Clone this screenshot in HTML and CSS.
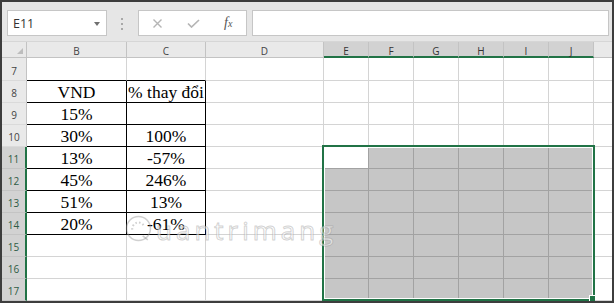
FILE: index.html
```html
<!DOCTYPE html>
<html lang="vi">
<head>
  <meta charset="UTF-8">
  <title>Excel - chọn vùng E11:J17</title>
  <link rel="stylesheet" href="styles.css">
</head>
<body>
  <div class="app">
    <div class="toolbar">
      <div class="namebox"><span>E11</span><span class="caret"></span></div>
      <div class="grip"><i></i><i></i><i></i></div>
      <div class="fbuttons">
        <svg class="icon-x" viewBox="0 0 11 9"><path d="M1.5 0.5L9.5 8.5M9.5 0.5L1.5 8.5"></path></svg>
        <svg class="icon-ok" viewBox="0 0 13 9"><path d="M1 4.5L4.5 8L12 1"></path></svg>
        <span class="fx">f<small>x</small></span>
      </div>
      <div class="formula"></div>
    </div>

    <div class="sheet">
      <!-- column headers -->
      <div class="corner"></div>
      <div class="ch">B</div><div class="ch">C</div><div class="ch">D</div>
      <div class="ch on">E</div><div class="ch on">F</div><div class="ch on">G</div>
      <div class="ch on">H</div><div class="ch on">I</div><div class="ch on">J</div>
      <div class="ch k"></div>

      <!-- row 7 -->
      <div class="rh">7</div>
      <div class="c top"></div><div class="c top"></div><div class="c"></div>
      <div class="c"></div><div class="c"></div><div class="c"></div><div class="c"></div><div class="c"></div><div class="c"></div>
      <div class="c k"></div>

      <!-- row 8 -->
      <div class="rh">8</div>
      <div class="c t">VND</div><div class="c t">% thay đổi</div><div class="c"></div>
      <div class="c"></div><div class="c"></div><div class="c"></div><div class="c"></div><div class="c"></div><div class="c"></div>
      <div class="c k"></div>

      <!-- row 9 -->
      <div class="rh">9</div>
      <div class="c t">15%</div><div class="c t"></div><div class="c"></div>
      <div class="c"></div><div class="c"></div><div class="c"></div><div class="c"></div><div class="c"></div><div class="c"></div>
      <div class="c k"></div>

      <!-- row 10 -->
      <div class="rh">10</div>
      <div class="c t">30%</div><div class="c t">100%</div><div class="c"></div>
      <div class="c"></div><div class="c"></div><div class="c"></div><div class="c"></div><div class="c"></div><div class="c"></div>
      <div class="c k"></div>

      <!-- row 11 -->
      <div class="rh on">11</div>
      <div class="c t">13%</div><div class="c t">-57%</div><div class="c"></div>
      <div class="c s a"></div><div class="c s"></div><div class="c s"></div><div class="c s"></div><div class="c s"></div><div class="c s"></div>
      <div class="c k"></div>

      <!-- row 12 -->
      <div class="rh on">12</div>
      <div class="c t">45%</div><div class="c t">246%</div><div class="c"></div>
      <div class="c s"></div><div class="c s"></div><div class="c s"></div><div class="c s"></div><div class="c s"></div><div class="c s"></div>
      <div class="c k"></div>

      <!-- row 13 -->
      <div class="rh on">13</div>
      <div class="c t">51%</div><div class="c t">13%</div><div class="c"></div>
      <div class="c s"></div><div class="c s"></div><div class="c s"></div><div class="c s"></div><div class="c s"></div><div class="c s"></div>
      <div class="c k"></div>

      <!-- row 14 -->
      <div class="rh on">14</div>
      <div class="c t">20%</div><div class="c t">-61%</div><div class="c"></div>
      <div class="c s"></div><div class="c s"></div><div class="c s"></div><div class="c s"></div><div class="c s"></div><div class="c s"></div>
      <div class="c k"></div>

      <!-- row 15 -->
      <div class="rh on">15</div>
      <div class="c"></div><div class="c"></div><div class="c"></div>
      <div class="c s"></div><div class="c s"></div><div class="c s"></div><div class="c s"></div><div class="c s"></div><div class="c s"></div>
      <div class="c k"></div>

      <!-- row 16 -->
      <div class="rh on">16</div>
      <div class="c"></div><div class="c"></div><div class="c"></div>
      <div class="c s"></div><div class="c s"></div><div class="c s"></div><div class="c s"></div><div class="c s"></div><div class="c s"></div>
      <div class="c k"></div>

      <!-- row 17 -->
      <div class="rh on">17</div>
      <div class="c"></div><div class="c"></div><div class="c"></div>
      <div class="c s"></div><div class="c s"></div><div class="c s"></div><div class="c s"></div><div class="c s"></div><div class="c s"></div>
      <div class="c k"></div>

      <!-- selection outline E11:J17, laid over its grid area -->
      <div class="selection"><span class="handle"></span></div>

      <div class="watermark">
        <svg class="wm-logo" viewBox="0 0 26 26">
          <circle cx="13" cy="13" r="11.5"></circle>
          <path class="wm-dots" d="M7 14a6 6 0 0 1 11-4"></path>
          <path d="M17 20l5 4"></path>
        </svg>
        <span>uantrimang</span>
      </div>
    </div>
  </div>
</body>
</html>
```

FILE: styles.css
```css
:root {
  --frame: #3d3d3d;
  --bar: #e6e6e6;
  --box-border: #c6c6c6;
  --head: #e9e9e9;
  --head-on: #d2d2d2;
  --head-line: #c3c3c3;
  --grid: #d4d4d4;
  --green: #217346;
  --sel: #c6c6c6;
  --sel-line: #a2a2a2;
}

* {
  box-sizing: border-box;
}

body {
  margin: 0;
  font-family: "Open Sans", "Liberation Sans", sans-serif;
}

.app {
  width: 614px;
  height: 303px;
  border: 2px solid var(--frame);
  background-color: var(--bar);
  overflow: hidden;
}

/* formula bar */
.toolbar {
  display: flex;
  align-items: flex-start;
  height: 40px;
  padding: 8px 3px 0 5px;
  border-bottom: 1px solid #d6d6d6;
}

.namebox {
  display: flex;
  align-items: center;
  justify-content: space-between;
  width: 100px;
  height: 26px;
  padding: 0 6px 0 5px;
  background-color: white;
  border: 1px solid var(--box-border);
  font-size: 12.5px;
  color: #333;
}

.caret {
  width: 0;
  height: 0;
  margin-top: 1px;
  border-left: 3.5px solid transparent;
  border-right: 3.5px solid transparent;
  border-top: 4px solid #707070;
}

.grip {
  display: flex;
  flex-direction: column;
  gap: 3px;
  width: 3px;
  margin: 8px 14px 0;
}

.grip i {
  width: 2px;
  height: 2px;
  background-color: #a8a8a8;
}

.fbuttons {
  display: flex;
  align-items: center;
  gap: 24px;
  width: 109px;
  height: 26px;
  padding-left: 13px;
  background-color: white;
  border: 1px solid var(--box-border);
}

.fbuttons svg {
  fill: none;
  stroke: #b5b5b5;
}

.icon-x {
  width: 11px;
  height: 9px;
  stroke-width: 1.4;
}

.icon-ok {
  width: 13px;
  height: 9px;
  stroke-width: 1.7;
}

.fx {
  font-family: "Liberation Serif", serif;
  font-style: italic;
  font-size: 14px;
  color: #555;
  line-height: 1;
}

.fx small {
  font-size: 10px;
}

.formula {
  flex: 1;
  height: 26px;
  margin-left: 5px;
  background-color: white;
  border: 1px solid var(--box-border);
}

/* worksheet */
.sheet {
  position: relative;
  display: grid;
  grid-template-columns: 25px 100px 79px 118px repeat(6, 45px) 1fr;
  grid-template-rows: 16px 23px repeat(10, 22px);
  background-color: white;
}

.corner,
.ch {
  background-color: var(--head);
  border-right: 1px solid var(--head-line);
  border-bottom: 1px solid var(--head-line);
}

.corner {
  position: relative;
}

.corner::after {
  content: "";
  position: absolute;
  right: 3px;
  bottom: 3px;
  border-left: 6px solid transparent;
  border-bottom: 6px solid #bdbdbd;
}

.ch {
  padding-top: 3px;
  font-size: 10px;
  line-height: 12px;
  text-align: center;
  color: #444;
}

.ch.on {
  background-color: var(--head-on);
  border-bottom: 2px solid var(--green);
  color: #333;
}

.ch.k {
  border-right: none;
}

.rh {
  display: flex;
  align-items: flex-end;
  justify-content: center;
  padding-bottom: 2px;
  background-color: var(--head);
  border-right: 1px solid var(--head-line);
  border-bottom: 1px solid #dadada;
  font-size: 10px;
  line-height: 14px;
  color: #444;
}

.rh.on {
  background-color: var(--head-on);
  border-right: 2px solid var(--green);
  border-bottom-color: #c4c4c4;
  color: #2f5c45;
}

.c {
  display: flex;
  align-items: flex-end;
  justify-content: center;
  border-right: 1px solid var(--grid);
  border-bottom: 1px solid var(--grid);
  font-family: "Liberation Serif", serif;
  font-size: 17.5px;
  line-height: 19px;
  white-space: nowrap;
  color: black;
}

.c.k {
  border-right: none;
}

.c.top {
  border-bottom-color: black;
}

.c.t {
  border-right-color: black;
  border-bottom-color: black;
}

.c.s {
  background-color: var(--sel);
  border-right-color: var(--sel-line);
  border-bottom-color: var(--sel-line);
}

.c.s.a {
  background-color: white;
}

/* absolutely placed in its grid area, so it takes no cells from the flow */
.selection {
  position: absolute;
  grid-column: 5 / 11;
  grid-row: 6 / 13;
  top: -2px;
  left: -2px;
  right: -1px;
  bottom: 0;
  border: 2px solid var(--green);
  box-shadow: inset 0 0 0 1px white;
  pointer-events: none;
}

.handle {
  position: absolute;
  right: -2px;
  bottom: -2px;
  width: 6px;
  height: 6px;
  background-color: var(--green);
  border-left: 1px solid white;
  border-top: 1px solid white;
}

.watermark {
  position: absolute;
  left: 123px;
  top: 166px;
  display: flex;
  align-items: center;
  gap: 4px;
  pointer-events: none;
}

.wm-logo {
  width: 27px;
  height: 27px;
  fill: none;
  stroke: rgba(150, 150, 150, 0.45);
  stroke-width: 1.5;
}

.wm-dots {
  stroke-dasharray: 1.5 2;
  stroke-width: 2;
}

.watermark span {
  margin-top: 4px;
  font-family: "Open Sans", sans-serif;
  font-size: 26px;
  letter-spacing: 4px;
  color: rgba(255, 255, 255, 0.55);
  -webkit-text-stroke: 1px rgba(140, 140, 140, 0.4);
}
```
